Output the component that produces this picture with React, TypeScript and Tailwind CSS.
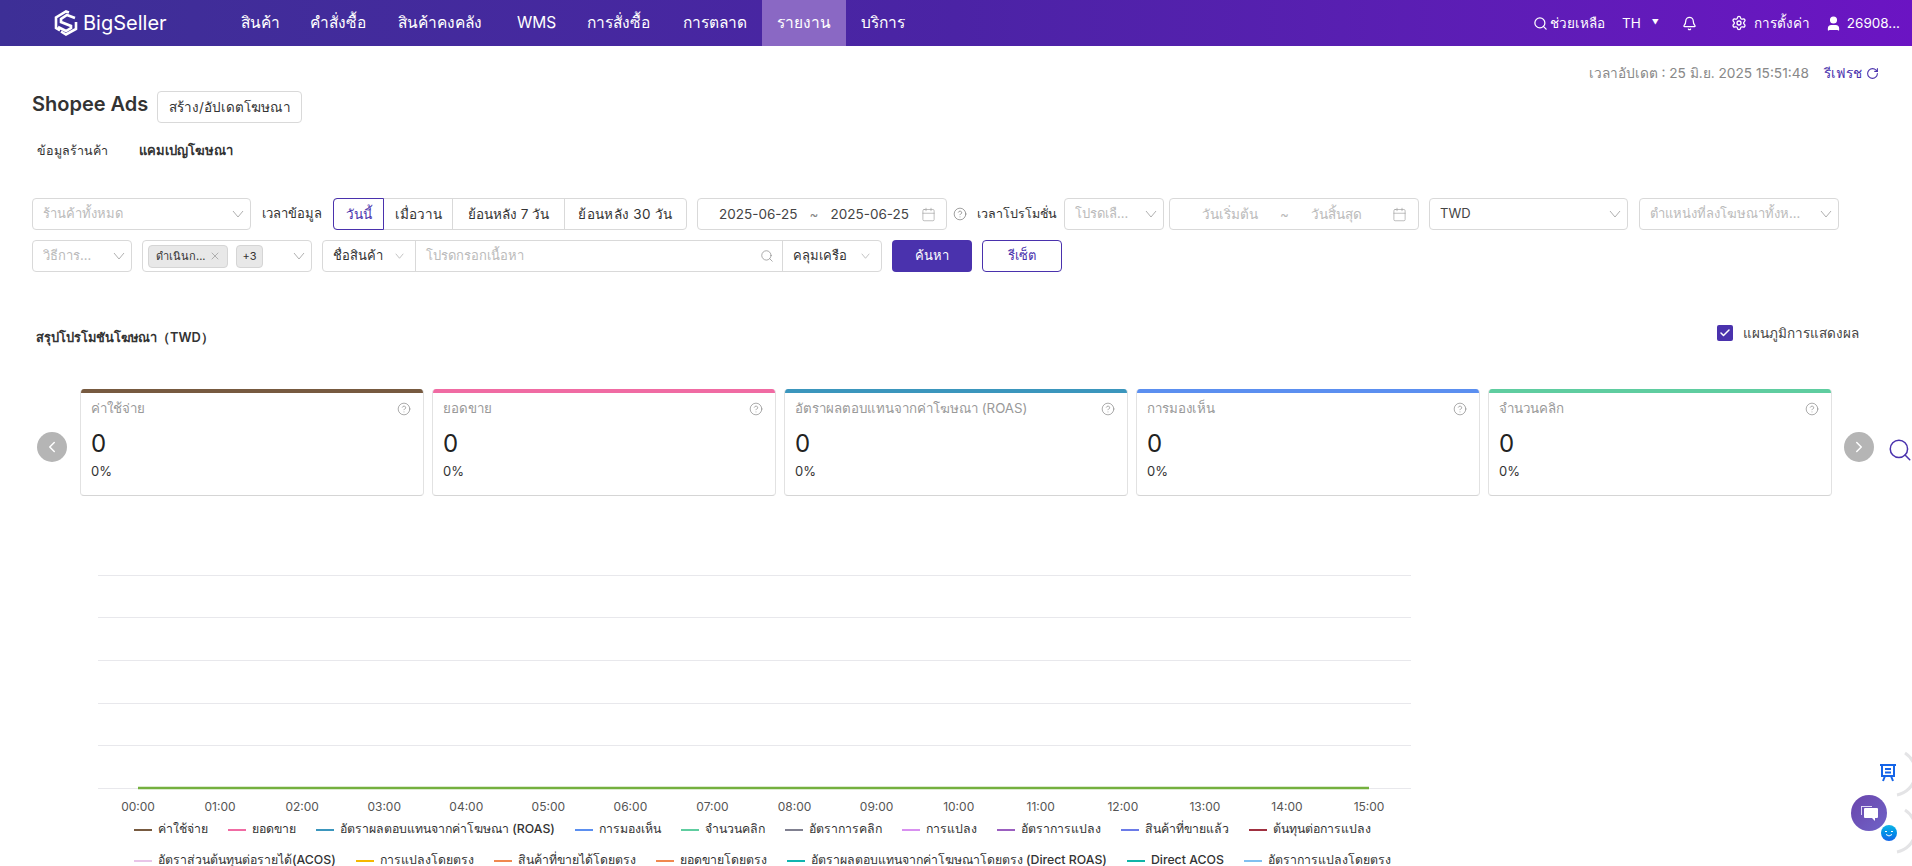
import { Bell, Calendar, ChevronLeft, ChevronRight, CircleHelp, RotateCw, Search, Settings, User, X, Check } from "lucide-react";

const navItems = [
  { label: "สินค้า", width: "w-[69px]" },
  { label: "คำสั่งซื้อ", width: "w-[88px]" },
  { label: "สินค้าคงคลัง", width: "w-[119px]" },
  { label: "WMS", width: "w-[70px]" },
  { label: "การสั่งซื้อ", width: "w-[96px]" },
  { label: "การตลาด", width: "w-[94px]" },
  { label: "รายงาน", width: "w-[84px] bg-[#8a68c4]" },
  { label: "บริการ", width: "w-[90px]" },
];

const cards = [
  { title: "ค่าใช้จ่าย", bar: "bg-[#775a40]" },
  { title: "ยอดขาย", bar: "bg-[#f06ba3]" },
  { title: "อัตราผลตอบแทนจากค่าโฆษณา (ROAS)", bar: "bg-[#3b96bd]" },
  { title: "การมองเห็น", bar: "bg-[#5b8ff0]" },
  { title: "จำนวนคลิก", bar: "bg-[#5fcda0]" },
];

const legendTop = [
  { label: "ค่าใช้จ่าย", color: "bg-[#775a40]" },
  { label: "ยอดขาย", color: "bg-[#f06ba3]" },
  { label: "อัตราผลตอบแทนจากค่าโฆษณา (ROAS)", color: "bg-[#3b96bd]" },
  { label: "การมองเห็น", color: "bg-[#5b8ff0]" },
  { label: "จำนวนคลิก", color: "bg-[#5fcda0]" },
  { label: "อัตราการคลิก", color: "bg-[#808090]" },
  { label: "การแปลง", color: "bg-[#d890f0]" },
  { label: "อัตราการแปลง", color: "bg-[#9b5fc0]" },
  { label: "สินค้าที่ขายแล้ว", color: "bg-[#6b7be8]" },
  { label: "ต้นทุนต่อการแปลง", color: "bg-[#a03040]" },
];

const legendBottom = [
  { label: "อัตราส่วนต้นทุนต่อรายได้(ACOS)", color: "bg-[#e8c5e8]" },
  { label: "การแปลงโดยตรง", color: "bg-[#f5b800]" },
  { label: "สินค้าที่ขายได้โดยตรง", color: "bg-[#f0884f]" },
  { label: "ยอดขายโดยตรง", color: "bg-[#f0884f]" },
  { label: "อัตราผลตอบแทนจากค่าโฆษณาโดยตรง (Direct ROAS)", color: "bg-[#10b5b0]" },
  { label: "Direct ACOS", color: "bg-[#10b5a8]" },
  { label: "อัตราการแปลงโดยตรง", color: "bg-[#80c0f0]" },
];

const hours = Array.from({ length: 16 }, (_, i) => `${String(i).padStart(2, "0")}:00`);

function Chevron({ small }: { small?: boolean }) {
  return (
    <svg width={small ? 9 : 12} height={small ? 6 : 8} viewBox="0 0 12 8" fill="none" className="shrink-0">
      <path d="M1 1l5 6 5-6" stroke="#b0b0b0" strokeWidth="1" />
    </svg>
  );
}

function Select({ width, text, dark }: { width: string; text: string; dark?: boolean }) {
  return (
    <div className={`${width} h-8 shrink-0 flex items-center justify-between pl-2.5 pr-[6px] border border-[#d9d9d9] rounded-[4px] bg-white`}>
      <span className={`truncate text-[13px] ${dark ? "text-[#444]" : "text-[#bbb]"}`}>{text}</span>
      <Chevron />
    </div>
  );
}

function Logo() {
  return (
    <svg width="24" height="26" viewBox="0 0 24 26" fill="none" stroke="white" strokeWidth="2.6">
      <path d="M15 2.500L12 1.500 2 7.500V18l4 2.300" />
      <path d="M21 8l-8-3-6 4v3l10 4v2l-5 3-8-4" />
      <path d="M22 12v7l-10 5.500-5-3" />
    </svg>
  );
}

function StatCard({ title, bar }: { title: string; bar: string }) {
  return (
    <div className="w-[344px] h-[107px] shrink-0 border border-[#e2e2e2] border-t-0 border-b-[#d5d5d5] rounded-[4px] bg-white overflow-hidden">
      <div className={`h-1 ${bar}`} />
      <div className="pl-2.5 pr-3">
        <div className="flex items-center justify-between h-[31px]">
          <span className="text-[13.3px] text-[#999]">{title}</span>
          <CircleHelp size={14} strokeWidth={1.2} className="text-[#888]" />
        </div>
        <div className="text-[24px] leading-8 text-[#222] mt-[4px]">0</div>
        <div className="text-[13px] leading-5 text-[#333] mt-[1px]">0%</div>
      </div>
    </div>
  );
}

function Legend({ items }: { items: { label: string; color: string }[] }) {
  return (
    <div className="flex items-center gap-[20px] h-[31px] whitespace-nowrap">
      {items.map((item) => (
        <div key={item.label} className="flex items-center gap-[6px]">
          <span className={`w-[18px] h-[2px] ${item.color}`} />
          <span className="text-[12.3px] font-medium text-[#333]">{item.label}</span>
        </div>
      ))}
    </div>
  );
}

function Chart() {
  const grid = [16, 58, 101, 144, 186, 229];
  return (
    <svg width="1360" height="260" viewBox="0 0 1360 260" className="block">
      {grid.map((y) => (
        <line key={y} x1="18" x2="1331" y1={y + 0.5} y2={y + 0.5} stroke="#e8e8ec" />
      ))}
      <line x1="58" x2="1289" y1="229" y2="229" stroke="#74b03e" strokeWidth="2.5" />
      {hours.map((h, i) => (
        <text key={h} x={58 + i * 82.07} y="252" textAnchor="middle" fontSize="12" fill="#555">
          {h}
        </text>
      ))}
    </svg>
  );
}

export default function App() {
  return (
    <div className="relative h-[866px] overflow-hidden bg-white font-['Inter','Noto_Sans',sans-serif] text-[#333]">
      {/* Header */}
      <div className="h-[46px] flex items-center bg-gradient-to-r from-[#3d2f96] via-[#4b23a5] to-[#6b14c3] text-white">
        <div className="flex items-center gap-[5px] ml-[54px] w-[172px]">
          <Logo />
          <span className="text-[20px] leading-none">BigSeller</span>
        </div>
        <div className="flex items-center h-full text-[15.5px]">
          {navItems.map((item) => (
            <div key={item.label} className={`h-full flex items-center pl-[15px] ${item.width}`}>
              {item.label}
            </div>
          ))}
        </div>
        <div className="ml-auto flex items-center text-[13.5px] pr-[12px]">
          <Search size={15} className="mr-[2px]" />
          <span>ช่วยเหลือ</span>
          <span className="ml-[17px]">TH</span>
          <span className="ml-[11px] text-[7px]">▼</span>
          <Bell size={15} className="ml-[23px]" />
          <Settings size={16} className="ml-[34px]" />
          <span className="ml-[7px]">การตั้งค่า</span>
          <User size={17} fill="white" className="ml-[15px]" />
          <span className="ml-[5px]">26908...</span>
        </div>
      </div>

      {/* Update time */}
      <div className="mt-[17px] h-5 flex items-center justify-end pr-[33px] text-[13.7px]">
        <span className="text-[#888]">เวลาอัปเดต : 25 มิ.ย. 2025 15:51:48</span>
        <span className="ml-[15px] text-[13.5px] text-[#4a32ad]">รีเฟรช</span>
        <RotateCw size={13} className="ml-[4px] text-[#4a32ad]" />
      </div>

      {/* Title */}
      <div className="mt-2 h-8 pl-[32px] flex items-center">
        <span className="text-[20px] font-semibold text-[#333] mb-[6px]">Shopee Ads</span>
        <div className="ml-[9px] w-[145px] h-8 flex items-center justify-center border border-[#d9d9d9] rounded-[4px] text-[13.5px]">
          สร้าง/อัปเดตโฆษณา
        </div>
      </div>

      {/* Tabs */}
      <div className="mt-[18px] h-5 pl-[37px] flex items-center">
        <span className="w-[102px] text-[12.5px]">ข้อมูลร้านค้า</span>
        <span className="text-[13px] font-bold">แคมเปญโฆษณา</span>
      </div>

      {/* Filters */}
      <div className="mt-[37px] pl-[32px] flex items-center h-8 text-[13px]">
        <Select width="w-[219px]" text="ร้านค้าทั้งหมด" />
        <span className="ml-[11px] w-[71px]">เวลาข้อมูล</span>
        <div className="flex h-8 w-[354px] shrink-0 border border-[#d9d9d9] rounded-[4px] text-[13.5px]">
          <div className="w-[51px] -m-px h-8 flex items-center justify-center border border-[#4a32ad] rounded-l-[4px] text-[#4a32ad]">วันนี้</div>
          <div className="w-[69px] flex items-center justify-center border-r border-[#d9d9d9] ml-px">เมื่อวาน</div>
          <div className="w-[112px] flex items-center justify-center border-r border-[#d9d9d9]">ย้อนหลัง 7 วัน</div>
          <div className="flex-1 flex items-center justify-center tracking-[0.3px]">ย้อนหลัง 30 วัน</div>
        </div>
        <div className="ml-[10px] w-[250px] h-8 shrink-0 flex items-center justify-between pl-[21px] pr-[10px] border border-[#d9d9d9] rounded-[4px] text-[13.5px] text-[#444]">
          <span>2025-06-25</span>
          <span className="text-[#888]">~</span>
          <span>2025-06-25</span>
          <Calendar size={15} strokeWidth={1} className="text-[#999]" />
        </div>
        <CircleHelp size={14} strokeWidth={1.2} className="ml-[6px] text-[#777] shrink-0" />
        <span className="ml-[10px] w-[87px] shrink-0 text-[12.5px]">เวลาโปรโมชั่น</span>
        <Select width="w-[100px]" text="โปรดเลื..." />
        <div className="ml-[5px] w-[250px] h-8 shrink-0 flex items-center justify-between pl-[32px] pr-[11px] border border-[#d9d9d9] rounded-[4px] text-[13.5px] text-[#bbb]">
          <span>วันเริ่มต้น</span>
          <span>~</span>
          <span>วันสิ้นสุด</span>
          <Calendar size={15} strokeWidth={1} className="text-[#999] ml-[8px]" />
        </div>
        <div className="ml-[10px]"><Select width="w-[199px]" text="TWD" dark /></div>
        <div className="ml-[11px]"><Select width="w-[200px]" text="ตำแหน่งที่ลงโฆษณาทั้งห..." /></div>
      </div>

      <div className="mt-[10px] pl-[32px] flex items-center h-8 text-[13px]">
        <Select width="w-[100px]" text="วิธีการ..." />
        <div className="ml-[10px] w-[170px] h-8 flex items-center pl-[5px] pr-[6px] border border-[#d9d9d9] rounded-[4px]">
          <div className="w-[80px] h-[23px] flex items-center justify-between pl-[7px] pr-[6px] bg-[#e8e8e8] border border-[#d5d5d5] rounded-[4px] text-[11px]">
            <span className="truncate">ดำเนินก...</span>
            <X size={12} strokeWidth={1} className="text-[#777] shrink-0" />
          </div>
          <div className="ml-[8px] w-[27px] h-[23px] flex items-center justify-center bg-[#e8e8e8] border border-[#d5d5d5] rounded-[4px] text-[11px]">+3</div>
          <div className="ml-auto"><Chevron /></div>
        </div>
        <div className="ml-[10px] w-[560px] h-8 flex items-center border border-[#d9d9d9] rounded-[4px]">
          <div className="w-[93px] h-full shrink-0 flex items-center justify-between pl-[10px] pr-[11px] border-r border-[#d9d9d9]">
            <span>ชื่อสินค้า</span>
            <Chevron small />
          </div>
          <span className="flex-1 pl-[10px] text-[#bbb]">โปรดกรอกเนื้อหา</span>
          <Search size={14} strokeWidth={1.2} className="text-[#888] mr-[8px]" />
          <div className="w-[99px] h-full shrink-0 flex items-center justify-between pl-[10px] pr-[11px] border-l border-[#d9d9d9]">
            <span>คลุมเครือ</span>
            <Chevron small />
          </div>
        </div>
        <div className="ml-[10px] w-[80px] h-8 flex items-center justify-center rounded-[4px] bg-[#4a32ad] text-white">ค้นหา</div>
        <div className="ml-[10px] w-[80px] h-8 flex items-center justify-center rounded-[4px] border border-[#4a32ad] text-[#4a32ad]">รีเซ็ต</div>
      </div>

      {/* Summary */}
      <div className="mt-[51px] h-6 flex items-center justify-between pl-[36px] pr-[53px]">
        <span className="text-[12.8px] font-semibold mt-[5px]">สรุปโปรโมชันโฆษณา（TWD）</span>
        <div className="flex items-center gap-[10px] text-[13.5px] text-[#444] mb-[4px]">
          <span className="w-4 h-4 flex items-center justify-center rounded-[2px] bg-[#4a32ad]">
            <Check size={12} strokeWidth={3} className="text-white" />
          </span>
          แผนภูมิการแสดงผล
        </div>
      </div>

      <div className="mt-[42px] flex items-center">
        <div className="ml-[37px] mt-[9px] w-[30px] h-[30px] rounded-full bg-[#b5b5b5] flex items-center justify-center shrink-0">
          <ChevronLeft size={18} className="text-white" />
        </div>
        <div className="ml-[13px] flex gap-[8px]">
          {cards.map((card) => (
            <StatCard key={card.title} title={card.title} bar={card.bar} />
          ))}
        </div>
        <div className="ml-[12px] mt-[9px] w-[30px] h-[30px] rounded-full bg-[#b5b5b5] flex items-center justify-center shrink-0">
          <ChevronRight size={18} className="text-white" />
        </div>
        <Search size={26} strokeWidth={1.4} className="ml-[13px] mt-[14px] text-[#4a32ad] shrink-0" />
      </div>

      {/* Chart */}
      <div className="mt-[63px] ml-[80px]">
        <Chart />
      </div>
      <div className="ml-[134px] mt-[-5px]">
        <Legend items={legendTop} />
        <Legend items={legendBottom} />
      </div>

      {/* Floating widgets */}
      <svg width="60" height="130" viewBox="0 0 60 130" fill="none" className="absolute left-[1852px] top-[736px]">
        <path d="M53 17a23 23 0 0 1-8 42" stroke="#e4e4e6" strokeWidth="3" />
        <path d="M53 74a23 23 0 0 1-8 42" stroke="#e4e4e6" strokeWidth="3" />
        <path d="M28 29h16M30 29v11h12V29M33 33h6M33 36.500h6M33 40l-2 5M39 40l2 5" stroke="#1565e8" strokeWidth="2" />
      </svg>
      <div className="absolute left-[1851px] top-[795px] w-9 h-9 rounded-full bg-gradient-to-br from-[#6a45ac] to-[#6f63c8] flex items-center justify-center">
        <svg width="20" height="18" viewBox="0 0 20 18" fill="white">
          <path d="M6 4h12a1 1 0 0 1 1 1v8a1 1 0 0 1-1 1h-2v3l-3-3H6a1 1 0 0 1-1-1V5a1 1 0 0 1 1-1z" />
          <path d="M2 2h11v1H3v8H2z" fill="#e0d8f5" />
        </svg>
      </div>
      <div className="absolute left-[1881px] top-[825px] w-4 h-4 rounded-full bg-gradient-to-b from-[#12b5e5] to-[#1565e8] flex items-center justify-center">
        <svg width="12" height="12" viewBox="0 0 12 12" fill="none" stroke="white" strokeWidth="1">
          <path d="M2 5q1-2 2 0M8 5q1-2 2 0M3 7.500q3 3 6 0" />
        </svg>
      </div>
    </div>
  );
}
